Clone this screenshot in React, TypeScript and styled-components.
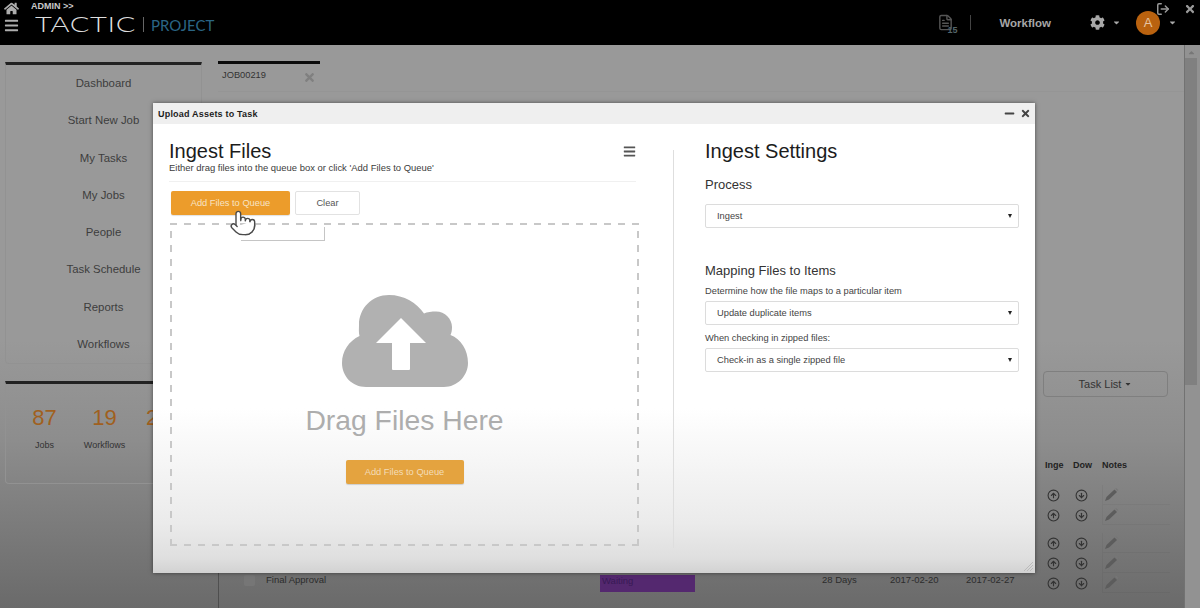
import React from "react";
import styled, { createGlobalStyle } from "styled-components";
import { FaHome, FaBars, FaTimes, FaCog, FaMinus, FaCaretDown, FaCaretUp } from "react-icons/fa";
import { CircleArrowUp, CircleArrowDown, LogOut, FileText, Pointer } from "lucide-react";

const Global = createGlobalStyle`
  html, body { margin: 0; padding: 0; background: #000; }
  body { font-family: "Liberation Sans", Arial, sans-serif; }
  * { box-sizing: border-box; }
`;

const Page = styled.div`
  position: relative;
  width: 1200px;
  height: 608px;
  overflow: hidden;
  display: flex;
  flex-direction: column;
  background: linear-gradient(#999 0, #999 340px, #8d8d8d 440px, #6a6a6a 608px);
`;

const Header = styled.header`
  position: relative;
  flex: none;
  height: 45px;
  background: #000;
  display: flex;
  align-items: stretch;
  padding-left: 4px;
`;

const HeaderIcons = styled.div`
  width: 27px;
  color: #aeaeae;
  display: flex;
  flex-direction: column;
  gap: 2px;
  padding-top: 1px;
  font-size: 15px;
`;

const Brand = styled.div`
  display: flex;
  flex-direction: column;
  padding-top: 1px;
`;

const Admin = styled.div`
  font-size: 9px;
  font-weight: 700;
  line-height: 10px;
  color: #c9c9c9;
`;

const LogoRow = styled.div`
  display: flex;
  align-items: center;
  height: 26px;
  margin-left: 4px;
`;

const Logo = styled.span`
  font-family: "Lato", sans-serif;
  font-weight: 300;
  font-size: 22px;
  line-height: 22px;
  color: #dedede;
  letter-spacing: 0.5px;
  width: 101px;
  display: inline-block;
  transform: scaleX(1.32);
  transform-origin: left;
  white-space: nowrap;
`;

const LogoBar = styled.span`
  width: 1px;
  height: 15px;
  background: #666;
  margin: 1px 7px 0 7px;
`;

const Project = styled.span`
  font-family: "Lato", sans-serif;
  font-weight: 400;
  font-size: 15px;
  color: #2a6585;
  padding-top: 2px;
`;

const HeaderRight = styled.div`
  margin-left: auto;
  display: flex;
  align-items: center;
  height: 45px;
  padding-right: 23px;
  color: #a8a8a8;
`;

const DocBadge = styled.span`
  position: relative;
  display: flex;
  color: #555;
  margin-right: 16px;
  & > b {
    position: absolute;
    right: -3px;
    bottom: -4px;
    font-size: 9px;
    color: #55666a;
  }
`;

const HeadDivider = styled.span`
  width: 1px;
  height: 15px;
  background: #444;
`;

const WorkflowLink = styled.span`
  font-size: 11.5px;
  font-weight: 700;
  color: #a6a6a6;
  margin: 0 39px 0 28px;
`;

const Caret = styled(FaCaretDown)<{ $gap?: number }>`
  font-size: 9px;
  color: #a8a8a8;
  margin-left: ${(p) => p.$gap ?? 0}px;
`;

const Avatar = styled.span`
  width: 24px;
  height: 24px;
  border-radius: 50%;
  background: #b9620f;
  color: #e6c4a2;
  font-size: 13px;
  display: flex;
  align-items: center;
  justify-content: center;
  margin: 0 8px 0 15px;
`;

const TopActions = styled.div`
  position: absolute;
  top: 2px;
  right: 4px;
  display: flex;
  align-items: center;
  gap: 14px;
  color: #9a9a9a;
`;

const Body = styled.div`
  flex: 1;
  display: flex;
  min-height: 0;
`;

const Sidebar = styled.aside`
  flex: none;
  width: 218px;
  padding: 17px 16px 0 5px;
  display: flex;
  flex-direction: column;
  gap: 17px;
`;

const Panel = styled.section`
  border-top: 3px solid #222;
  border-left: 1px solid #929292;
  border-right: 1px solid #929292;
  border-bottom: 1px solid #929292;
  border-radius: 0 0 4px 4px;
`;

const NavList = styled.nav`
  display: flex;
  flex-direction: column;
  height: 298px;
`;

const NavItem = styled.div`
  height: 37.4px;
  line-height: 37px;
  text-align: center;
  font-size: 11.4px;
  color: #3d3d3d;
`;

const Stats = styled.div`
  display: flex;
  height: 99px;
  padding: 22px 0 0 16px;
`;

const Stat = styled.div<{ $w: number }>`
  width: ${(p) => p.$w}px;
  text-align: center;
  flex: none;
`;

const StatNum = styled.div`
  font-size: 22px;
  line-height: 24px;
  color: #a0601e;
`;

const StatLabel = styled.div`
  font-size: 9px;
  color: #333;
  margin-top: 10px;
`;

const Content = styled.main`
  flex: 1;
  padding-top: 16px;
  display: flex;
  flex-direction: column;
`;

const TabStrip = styled.div`
  height: 31px;
  border-bottom: 1px solid #959595;
`;

const Tab = styled.div`
  width: 102px;
  border-top: 3px solid #0c0c0c;
  padding: 6px 4px 0 4px;
  display: flex;
  justify-content: space-between;
  font-size: 9.3px;
  color: #333;
  & > svg { color: #808080; font-size: 13px; margin-top: 1px; }
`;

const LowerPane = styled.div`
  flex: 1;
  margin-top: 16px;
  border-left: 1px solid rgba(0, 0, 0, 0.28);
  display: flex;
  flex-direction: column;
`;

const ListAction = styled.div`
  display: flex;
  justify-content: flex-end;
  padding: 263px 16px 0 0;
`;

const ListButton = styled.div`
  width: 125px;
  height: 26px;
  border: 1px solid #7f7f7f;
  border-radius: 4px;
  display: flex;
  align-items: center;
  justify-content: center;
  gap: 3px;
  font-size: 11px;
  color: #333;
`;

const Table = styled.div`
  margin-top: 58px;
  display: flex;
  flex-direction: column;
`;

const Row = styled.div<{ $h: number; $gap?: number }>`
  display: grid;
  grid-template-columns: 47px 334px 222px 68px 76px 79px 28px 29px 68px;
  height: ${(p) => p.$h}px;
  margin-top: ${(p) => p.$gap ?? 0}px;
  align-items: center;
  font-size: 9.5px;
  color: #2c2c2c;
  white-space: nowrap;
`;

const HeadRow = styled(Row)`
  font-weight: 700;
  font-size: 9px;
  color: #222;
`;

const RowCell = styled.span`
  margin-top: -7px;
`;

const IconCell = styled.span`
  display: flex;
  padding-left: 2px;
`;

const NoteCell = styled.span`
  display: flex;
  align-items: center;
  height: 100%;
  padding-left: 1px;
  border-left: 1px solid rgba(0, 0, 0, 0.04);
  border-bottom: 1px solid rgba(0, 0, 0, 0.04);
`;

const Check = styled.span`
  width: 11px;
  height: 11px;
  border-radius: 2px;
  background: #767676;
  margin: -6px 0 0 25px;
`;

const Waiting = styled.span`
  display: block;
  background: #54286f;
  color: #381a55;
  width: 95px;
  height: 17px;
  line-height: 11px;
  padding-left: 2px;
  margin-top: 1px;
`;

const ScrollTrack = styled.div`
  flex: none;
  width: 16px;
  border-left: 1px solid rgba(0, 0, 0, 0.22);
  padding: 3px 3px 0 0;
  background: #929292;
  display: flex;
  flex-direction: column;
  align-items: center;
  color: #777;
  font-size: 9px;
`;

const ScrollThumb = styled.div`
  flex: none;
  width: 100%;
  height: 327px;
  margin-top: 1px;
  background: #808080;
`;

const Modal = styled.div`
  position: absolute;
  left: 153px;
  top: 103px;
  width: 882px;
  height: 470px;
  background: linear-gradient(#fff 0, #fff 305px, #ebebeb 420px, #dfdfdf 455px, #d2d2d2 470px);
  box-shadow: 0 0 4px rgba(0, 0, 0, 0.5);
  display: flex;
  flex-direction: column;
`;

const ModalBar = styled.div`
  height: 21px;
  background: #efefef;
  flex: none;
  display: flex;
  align-items: center;
  justify-content: space-between;
  padding: 0 4px 0 5px;
  font-size: 9px;
  font-weight: 700;
  color: #1d1d1d;
  letter-spacing: 0.2px;
`;

const WinIcons = styled.div`
  display: flex;
  align-items: center;
  gap: 5px;
  color: #444;
  font-size: 11px;
`;

const Columns = styled.div`
  flex: 1;
  display: flex;
  min-height: 0;
`;

const LeftCol = styled.div`
  position: relative;
  flex: none;
  width: 520px;
  padding: 15px 0 0 16px;
  display: flex;
  flex-direction: column;
`;

const RightCol = styled.div`
  flex: 1;
  margin: 26px 0 25px;
  border-left: 1px solid #dedede;
  padding-left: 31px;
  display: flex;
  flex-direction: column;
`;

const TitleRow = styled.div`
  display: flex;
  justify-content: space-between;
  align-items: center;
  width: 467px;
  color: #555;
  font-size: 13px;
`;

const Title = styled.h2`
  margin: 0;
  font-size: 20px;
  line-height: 24px;
  font-weight: 400;
  color: #1c1c1c;
`;

const SettingsTitle = styled(Title)`
  margin-top: -11px;
`;

const Sub = styled.p`
  margin: -1px 0 0;
  font-size: 9.45px;
  line-height: 12px;
  color: #3c3c3c;
`;

const Rule = styled.div`
  width: 467px;
  height: 1px;
  background: #f0f0f0;
  margin-top: 7px;
`;

const ToolRow = styled.div`
  display: flex;
  gap: 5px;
  margin: 9px 0 0 2px;
`;

const OrangeButton = styled.div`
  width: 119px;
  height: 24px;
  background: #ec9c2b;
  border-radius: 2px;
  color: #f7e3c4;
  font-size: 9.3px;
  display: flex;
  align-items: center;
  justify-content: center;
  box-shadow: 0 1px 1px rgba(0, 0, 0, 0.12);
`;

const ClearButton = styled.div`
  width: 65px;
  height: 24px;
  border: 1px solid #e2e2e2;
  border-radius: 2px;
  color: #555;
  font-size: 9.3px;
  display: flex;
  align-items: center;
  justify-content: center;
`;

const DropZone = styled.div`
  margin: 8px 0 0 1px;
  width: 469px;
  height: 323px;
  background:
    repeating-linear-gradient(90deg, #c8c8c8 0 7px, transparent 7px 14px) top / 100% 2px no-repeat,
    repeating-linear-gradient(90deg, #c8c8c8 0 7px, transparent 7px 14px) bottom / 100% 2px no-repeat,
    repeating-linear-gradient(0deg, #c8c8c8 0 7px, transparent 7px 14px) left / 2px 100% no-repeat,
    repeating-linear-gradient(0deg, #c8c8c8 0 7px, transparent 7px 14px) right / 2px 100% no-repeat;
  display: flex;
  flex-direction: column;
  align-items: center;
  padding-top: 72px;
`;

const DropText = styled.div`
  font-size: 28.3px;
  line-height: 32px;
  color: #adadad;
  margin-top: 17px;
`;

const LowerOrange = styled(OrangeButton)`
  width: 118px;
  margin-top: 24px;
  background: #e4a33f;
  color: #f3dcb8;
  box-shadow: 0 1px 1px rgba(0, 0, 0, 0.15);
`;

const Cursor = styled(Pointer)`
  position: absolute;
  left: 76px;
  top: 85px;
  color: #4a4a4a;
  fill: #fff;
`;

const Ghost = styled.div`
  position: absolute;
  left: 88px;
  top: 103px;
  width: 84px;
  height: 14px;
  border-right: 1px solid #c5c5c5;
  border-bottom: 1px solid #c5c5c5;
`;

const Section = styled.h3<{ $gap: number }>`
  margin: ${(p) => p.$gap}px 0 0;
  font-size: 13px;
  line-height: 16px;
  font-weight: 400;
  color: #333;
`;

const Field = styled.div<{ $gap?: number }>`
  margin-top: ${(p) => p.$gap ?? 4}px;
  height: 24px;
  width: 314px;
  border: 1px solid #dcdcdc;
  border-radius: 2px;
  display: flex;
  align-items: center;
  justify-content: space-between;
  padding: 0 6px 0 11px;
  font-size: 9.3px;
  color: #444;
  background: #fff;
  &::after {
    content: "";
    border-left: 2.5px solid transparent;
    border-right: 2.5px solid transparent;
    border-top: 4px solid #222;
  }
`;

const Hint = styled.div<{ $gap: number }>`
  margin-top: ${(p) => p.$gap}px;
  font-size: 9.3px;
  line-height: 12px;
  color: #444;
`;

const Grip = styled.svg`
  position: absolute;
  right: 1px;
  bottom: 1px;
`;

const Cloud = () => (
  <svg width="126" height="92" viewBox="0 0 126 92">
    <path
      fill="#b1b1b1"
      d="M24 92 C10 92 0 81 0 68 C0 56 7 46 17.5 41 C16.5 37 17 34 17 30 C17 13 30 0 47 0 C62 0 75 8 82 18.5 C85 17 90 16.5 94 16.5 C103 16.5 110 24 110 32 C110 35 109.5 38 108.5 40 C119 44 126 55 126 68 C126 81 115 92 102 92 Z"
    />
    <path
      d="M59 23 L84 48 L68 48 L68 74 Q68 75 67 75 L51 75 Q50 75 50 74 L50 48 L34 48 Z"
      fill="#fff"
    />
  </svg>
);

const NotePencil = () => (
  <svg width="15" height="15" viewBox="0 0 15 15">
    <path d="M1 14 L2.5 10 L10.5 2.5 L13 5 L5 12.5 Z" fill="#5c5c5c" />
    <path d="M11.2 1.8 L12.2 1 L14.2 3 L13.4 4.1 Z" fill="#777" />
  </svg>
);

const navItems = [
  "Dashboard", "Start New Job", "My Tasks", "My Jobs",
  "People", "Task Schedule", "Reports", "Workflows",
];

const Blank = () => (
  <>
    <span /><span /><span /><span /><span /><span />
  </>
);

const IconCells = () => (
  <>
    <IconCell><CircleArrowUp size={13} color="#333" /></IconCell>
    <IconCell><CircleArrowDown size={13} color="#333" /></IconCell>
    <NoteCell><NotePencil /></NoteCell>
  </>
);

export default function App() {
  return (
    <Page>
      <Global />
      <Header>
        <HeaderIcons>
          <FaHome />
          <FaBars />
        </HeaderIcons>
        <Brand>
          <Admin>ADMIN &gt;&gt;</Admin>
          <LogoRow>
            <Logo>TACTIC</Logo>
            <LogoBar />
            <Project>PROJECT</Project>
          </LogoRow>
        </Brand>
        <HeaderRight>
          <DocBadge>
            <FileText size={17} />
            <b>15</b>
          </DocBadge>
          <HeadDivider />
          <WorkflowLink>Workflow</WorkflowLink>
          <FaCog size={15} />
          <Caret $gap={7} />
          <Avatar>A</Avatar>
          <Caret />
        </HeaderRight>
        <TopActions>
          <LogOut size={14} strokeWidth={2.5} />
          <FaTimes size={12} />
        </TopActions>
      </Header>
      <Body>
        <Sidebar>
          <Panel>
            <NavList>
              {navItems.map((n) => (
                <NavItem key={n}>{n}</NavItem>
              ))}
            </NavList>
          </Panel>
          <Panel>
            <Stats>
              <Stat $w={45}>
                <StatNum>87</StatNum>
                <StatLabel>Jobs</StatLabel>
              </Stat>
              <Stat $w={75}>
                <StatNum>19</StatNum>
                <StatLabel>Workflows</StatLabel>
              </Stat>
              <Stat $w={20}>
                <StatNum>2</StatNum>
              </Stat>
            </Stats>
          </Panel>
        </Sidebar>
        <Content>
          <TabStrip>
            <Tab>
              JOB00219
              <FaTimes />
            </Tab>
          </TabStrip>
          <LowerPane>
            <ListAction>
              <ListButton>
                Task List <FaCaretDown size={8} />
              </ListButton>
            </ListAction>
            <Table>
              <HeadRow $h={20}>
                <Blank />
                <span>Inge</span>
                <span>Dow</span>
                <span>Notes</span>
              </HeadRow>
              <Row $h={20} $gap={10}>
                <Blank />
                <IconCells />
              </Row>
              <Row $h={20}>
                <Blank />
                <IconCells />
              </Row>
              <Row $h={20} $gap={8}>
                <Blank />
                <IconCells />
              </Row>
              <Row $h={20}>
                <Blank />
                <IconCells />
              </Row>
              <Row $h={20}>
                <Check />
                <RowCell>Final Approval</RowCell>
                <Waiting>Waiting</Waiting>
                <RowCell>28 Days</RowCell>
                <RowCell>2017-02-20</RowCell>
                <RowCell>2017-02-27</RowCell>
                <IconCells />
              </Row>
            </Table>
          </LowerPane>
        </Content>
        <ScrollTrack>
          <FaCaretUp />
          <ScrollThumb />
        </ScrollTrack>
      </Body>
      <Modal>
        <ModalBar>
          Upload Assets to Task
          <WinIcons>
            <FaMinus />
            <FaTimes />
          </WinIcons>
        </ModalBar>
        <Columns>
          <LeftCol>
            <TitleRow>
              <Title>Ingest Files</Title>
              <FaBars />
            </TitleRow>
            <Sub>Either drag files into the queue box or click 'Add Files to Queue'</Sub>
            <Rule />
            <ToolRow>
              <OrangeButton>Add Files to Queue</OrangeButton>
              <ClearButton>Clear</ClearButton>
            </ToolRow>
            <DropZone>
              <Cloud />
              <DropText>Drag Files Here</DropText>
              <LowerOrange>Add Files to Queue</LowerOrange>
            </DropZone>
            <Ghost />
            <Cursor size={28} strokeWidth={1.2} />
          </LeftCol>
          <RightCol>
            <SettingsTitle>Ingest Settings</SettingsTitle>
            <Section $gap={14}>Process</Section>
            <Field $gap={11}>Ingest</Field>
            <Section $gap={35}>Mapping Files to Items</Section>
            <Hint $gap={6}>Determine how the file maps to a particular item</Hint>
            <Field>Update duplicate items</Field>
            <Hint $gap={7}>When checking in zipped files:</Hint>
            <Field>Check-in as a single zipped file</Field>
          </RightCol>
        </Columns>
        <Grip width="12" height="12" viewBox="0 0 12 12">
          <path d="M11 2 L2 11 M11 5 L5 11 M11 8 L8 11" stroke="#bbb" strokeWidth="1" />
        </Grip>
      </Modal>
    </Page>
  );
}
